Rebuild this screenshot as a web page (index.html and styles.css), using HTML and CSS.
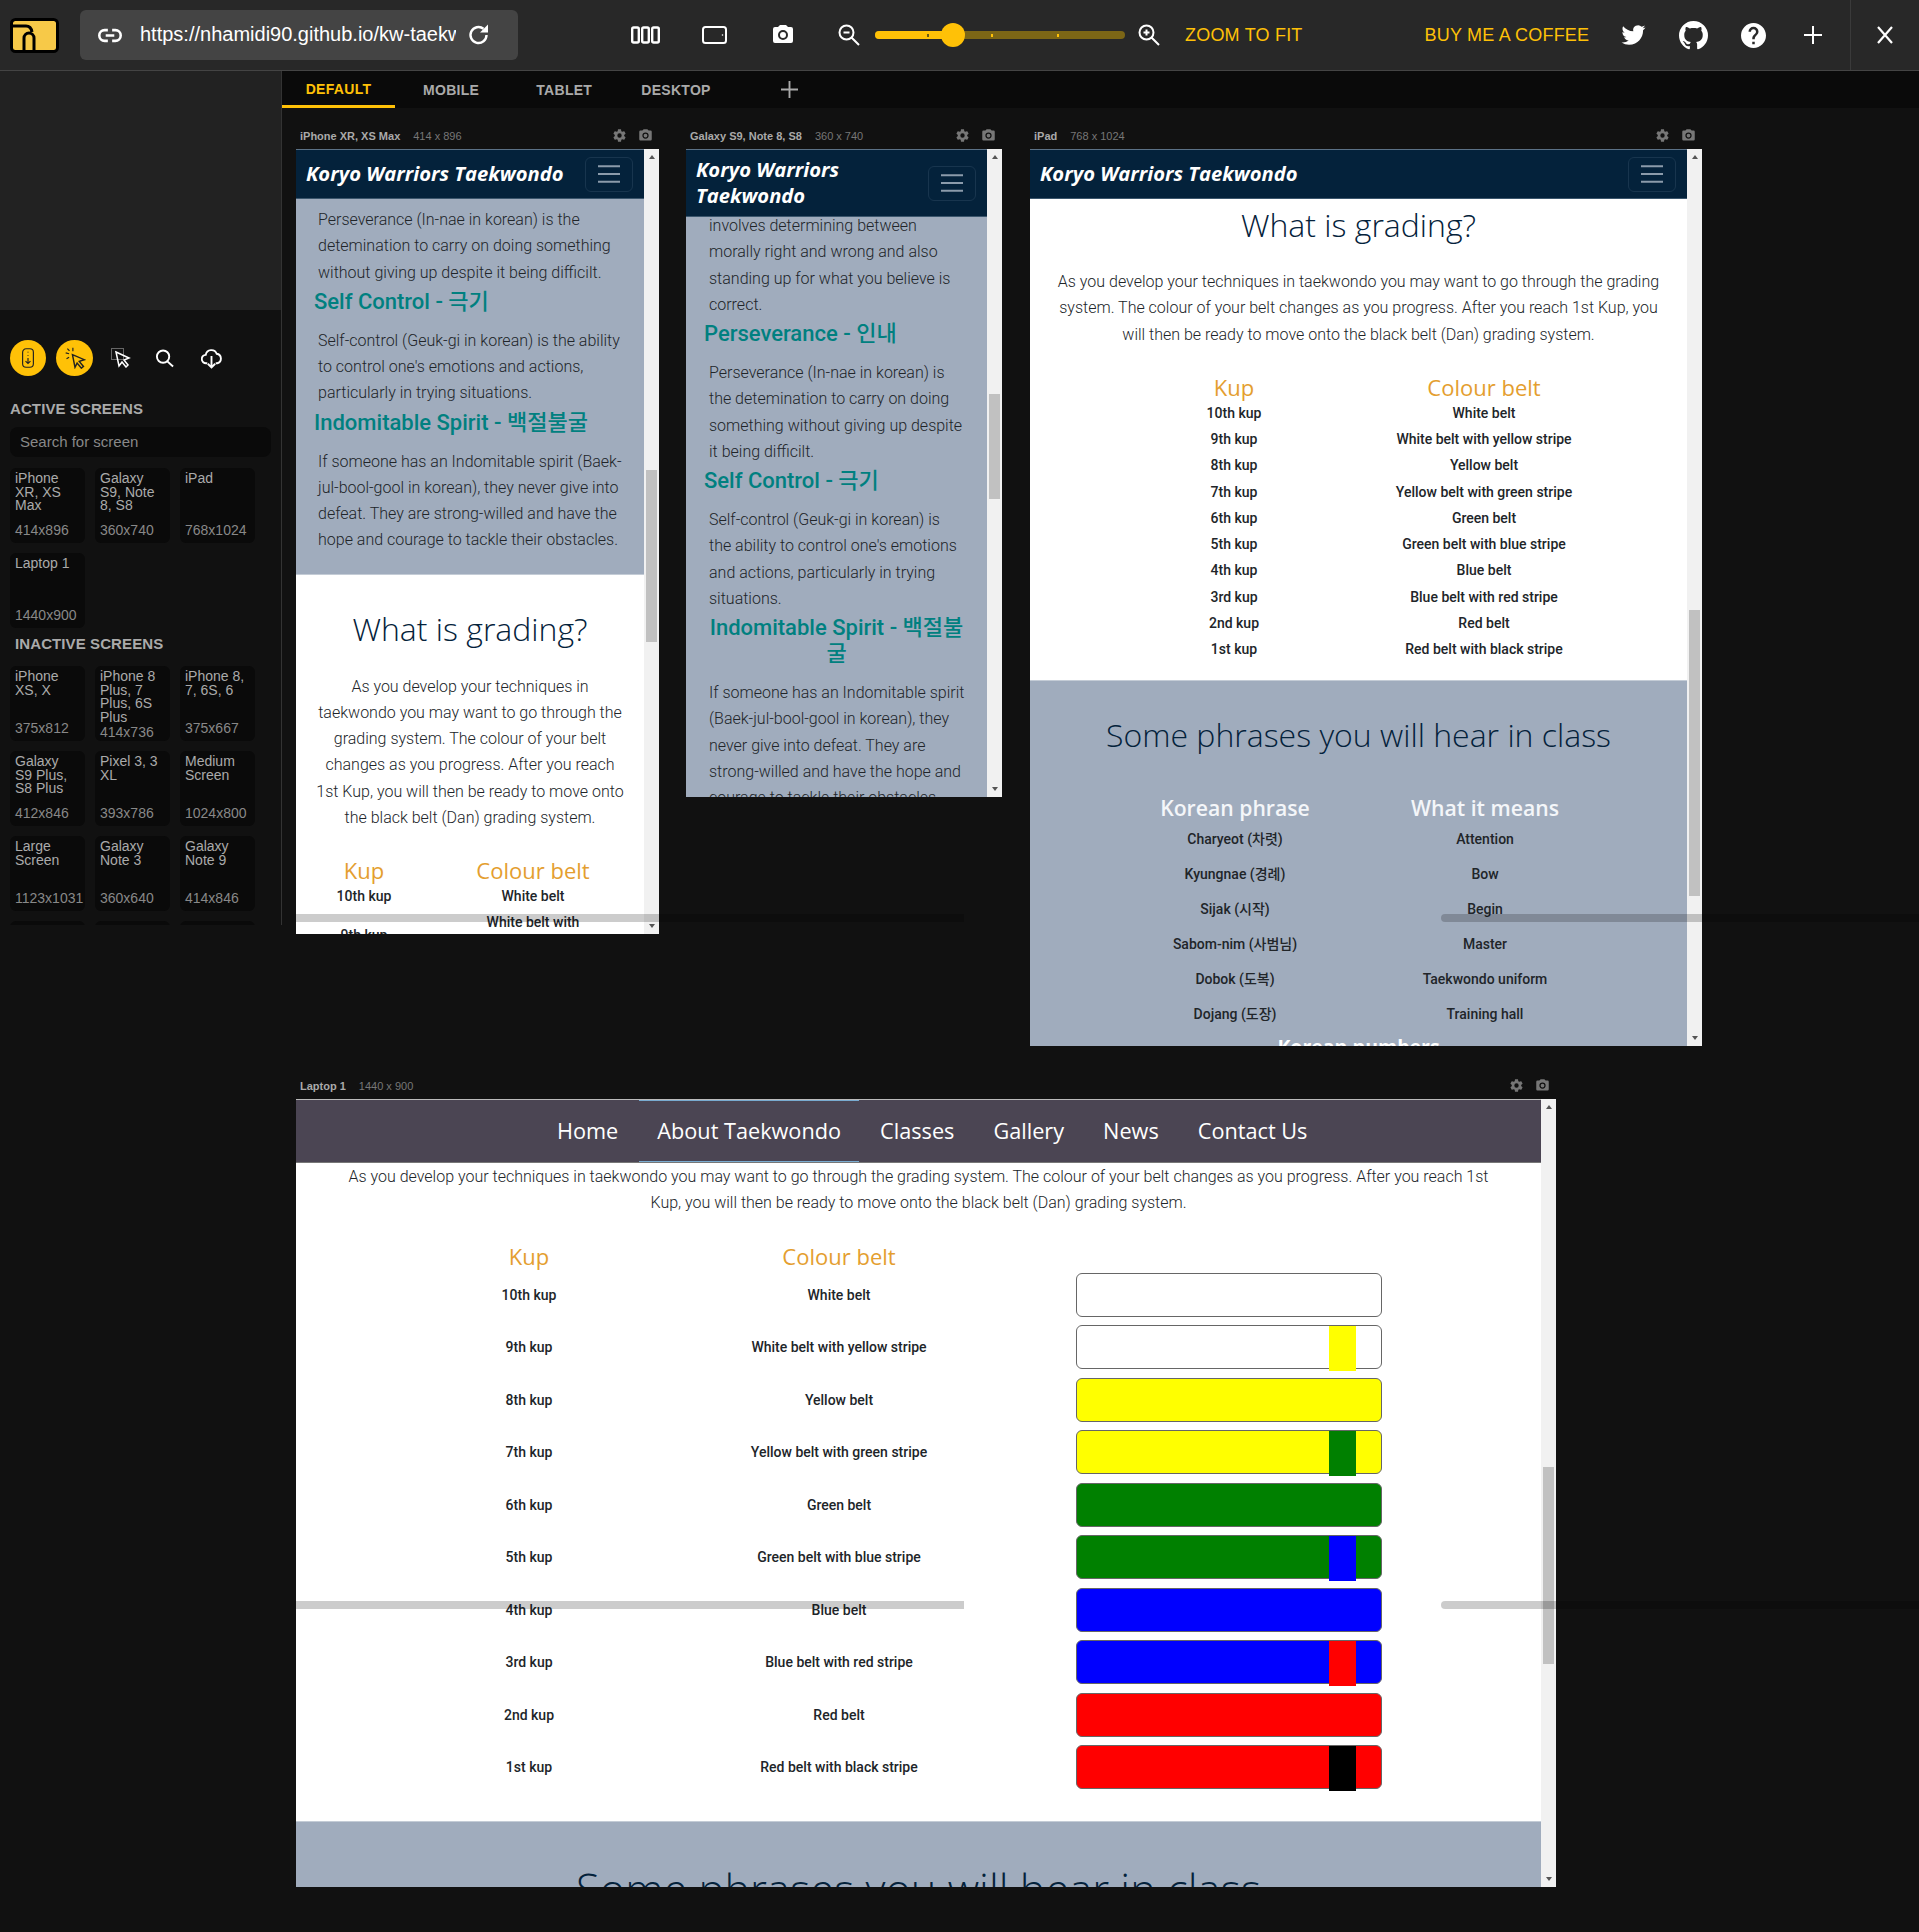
FILE: index.html
```html
<!DOCTYPE html>
<html lang="en">
<head>
    <meta charset="UTF-8">
    <meta name="viewport" content="width=device-width, initial-scale=1.0">
    <title>Responsively</title>
    <link rel="stylesheet" href="styles.css">
</head>
<body>
    <svg class="sprite">
        <symbol id="gear" viewBox="0 0 24 24"><path d="M12,15.5A3.5,3.5 0 0,1 8.5,12A3.5,3.5 0 0,1 12,8.5A3.5,3.5 0 0,1 15.5,12A3.5,3.5 0 0,1 12,15.5M19.43,12.97C19.47,12.65 19.5,12.33 19.5,12C19.5,11.67 19.47,11.34 19.43,11L21.54,9.37C21.73,9.22 21.78,8.95 21.66,8.73L19.66,5.27C19.54,5.05 19.27,4.96 19.05,5.05L16.56,6.05C16.04,5.66 15.5,5.32 14.87,5.07L14.5,2.42C14.46,2.18 14.25,2 14,2H10C9.75,2 9.54,2.18 9.5,2.42L9.13,5.07C8.5,5.32 7.96,5.66 7.44,6.05L4.95,5.05C4.73,4.96 4.46,5.05 4.34,5.27L2.34,8.73C2.21,8.95 2.27,9.22 2.46,9.37L4.57,11C4.53,11.34 4.5,11.67 4.5,12C4.5,12.33 4.53,12.65 4.57,12.97L2.46,14.63C2.27,14.78 2.21,15.05 2.34,15.27L4.34,18.73C4.46,18.95 4.73,19.03 4.95,18.95L7.44,17.94C7.96,18.34 8.5,18.68 9.13,18.93L9.5,21.58C9.54,21.82 9.75,22 10,22H14C14.25,22 14.46,21.82 14.5,21.58L14.87,18.93C15.5,18.67 16.04,18.34 16.56,17.94L19.05,18.95C19.27,19.03 19.54,18.95 19.66,18.73L21.66,15.27C21.78,15.05 21.73,14.78 21.54,14.63L19.43,12.97Z"/></symbol>
        <symbol id="camera" viewBox="0 0 24 24"><path d="M4,4H7L9,2H15L17,4H20A2,2 0 0,1 22,6V18A2,2 0 0,1 20,20H4A2,2 0 0,1 2,18V6A2,2 0 0,1 4,4M12,7A5,5 0 0,0 7,12A5,5 0 0,0 12,17A5,5 0 0,0 17,12A5,5 0 0,0 12,7M12,9A3,3 0 0,1 15,12A3,3 0 0,1 12,15A3,3 0 0,1 9,12A3,3 0 0,1 12,9Z"/></symbol>
        <symbol id="burger" viewBox="0 0 22 18"><path d="M0 1.2h22M0 9h22M0 16.8h22" stroke="#8b9bab" stroke-width="2"/></symbol>
    </svg>

    <header class="topbar">
        <svg class="logo" viewBox="0 0 49 35"><rect x="1.500" y="1.500" width="46" height="32" rx="4" fill="#f7c948" stroke="#000" stroke-width="3"/><path d="M1.500 8H16q5 0 6 6M14 33V20a5 5 0 0 1 10 0v13" fill="none" stroke="#000" stroke-width="3"/></svg>
        <div class="urlbar">
            <svg class="url-link" viewBox="0 0 24 14" fill="none" stroke="#fff" stroke-width="2.4"><path d="M10 2H7a5 5 0 0 0 0 10h3M14 2h3a5 5 0 0 1 0 10h-3M8 7h8"/></svg>
            <span class="url-text">https://nhamidi90.github.io/kw-taekwondo/grading.html</span>
            <svg class="url-reload" viewBox="0 0 24 24" fill="none" stroke="#fff" stroke-width="2.4"><path d="M19.5 12a8 8 0 1 1-3-6.2"/><path d="M21 1.500v8h-8z" fill="#fff" stroke="none"/></svg>
        </div>
        <svg class="tool tool-phones" viewBox="0 0 29 18" fill="none" stroke="#fff" stroke-width="2.4"><rect x="1.200" y="1.500" width="6.600" height="15" rx="1.500"/><rect x="11.200" y="1.500" width="6.600" height="15" rx="1.500"/><rect x="21.200" y="1.500" width="6.600" height="15" rx="1.500"/></svg>
        <svg class="tool tool-tablet" viewBox="0 0 25 18" fill="none" stroke="#fff" stroke-width="2"><rect x="1" y="1" width="23" height="16" rx="2.500"/><circle cx="20.500" cy="9" r=".8" fill="#fff" stroke="none"/></svg>
        <svg class="tool tool-camera" fill="#fff"><use href="#camera"/></svg>
        <svg class="tool tool-zoomout" viewBox="0 0 22 22" fill="none" stroke="#fff" stroke-width="2"><circle cx="8.500" cy="8.500" r="7"/><path d="M13.500 13.500l7.500 7.500M5.500 8.500h6"/></svg>
        <div class="slider"><div class="slider-fill"></div><i class="tick tick-a"></i><i class="tick tick-b"></i><i class="tick tick-c"></i><div class="slider-thumb"></div></div>
        <svg class="tool tool-zoomin" viewBox="0 0 22 22" fill="none" stroke="#fff" stroke-width="2"><circle cx="8.500" cy="8.500" r="7"/><path d="M13.500 13.500l7.500 7.500M5.500 8.500h6M8.500 5.500v6"/></svg>
        <span class="topbar-link zoom-fit">ZOOM TO FIT</span>
        <span class="topbar-link coffee">BUY ME A COFFEE</span>
        <svg class="tool tool-twitter" viewBox="0 0 24 24" fill="#fff"><path d="M23.953 4.57a10 10 0 01-2.825.775 4.958 4.958 0 002.163-2.723c-.951.555-2.005.959-3.127 1.184a4.92 4.92 0 00-8.384 4.482C7.69 8.095 4.067 6.13 1.64 3.162a4.822 4.822 0 00-.666 2.475c0 1.71.87 3.213 2.188 4.096a4.904 4.904 0 01-2.228-.616v.06a4.923 4.923 0 003.946 4.827 4.996 4.996 0 01-2.212.085 4.936 4.936 0 004.604 3.417 9.867 9.867 0 01-6.102 2.105c-.39 0-.779-.023-1.17-.067a13.995 13.995 0 007.557 2.209c9.053 0 13.998-7.496 13.998-13.985 0-.21 0-.42-.015-.63A9.935 9.935 0 0024 4.59z"/></svg>
        <svg class="tool tool-github" viewBox="2 2 20 20" fill="#fff"><path d="M12,2A10,10 0 0,0 2,12C2,16.42 4.87,20.17 8.84,21.5C9.34,21.58 9.5,21.27 9.5,21C9.5,20.77 9.5,20.14 9.5,19.31C6.73,19.91 6.14,17.97 6.14,17.97C5.68,16.81 5.03,16.5 5.03,16.5C4.12,15.88 5.1,15.9 5.1,15.9C6.1,15.97 6.63,16.93 6.63,16.93C7.5,18.45 8.97,18 9.54,17.76C9.63,17.11 9.89,16.67 10.17,16.42C7.95,16.17 5.62,15.31 5.62,11.5C5.62,10.39 6,9.5 6.65,8.79C6.55,8.54 6.2,7.5 6.75,6.15C6.75,6.15 7.59,5.88 9.5,7.17C10.29,6.95 11.15,6.84 12,6.84C12.85,6.84 13.71,6.95 14.5,7.17C16.41,5.88 17.25,6.15 17.25,6.15C17.8,7.5 17.45,8.54 17.35,8.79C18,9.5 18.38,10.39 18.38,11.5C18.38,15.32 16.04,16.16 13.81,16.41C14.17,16.72 14.5,17.33 14.5,18.26C14.5,19.6 14.5,20.68 14.5,21C14.5,21.27 14.66,21.59 15.17,21.5C19.14,20.16 22,16.42 22,12A10,10 0 0,0 12,2Z"/></svg>
        <svg class="tool tool-help" viewBox="2 2 20 20" fill="#fff"><path d="M15.07,11.25L14.17,12.17C13.45,12.89 13,13.5 13,15H11V14.5C11,13.39 11.45,12.39 12.17,11.67L13.41,10.41C13.78,10.05 14,9.55 14,9C14,7.89 13.1,7 12,7A2,2 0 0,0 10,9H8A4,4 0 0,1 12,5A4,4 0 0,1 16,9C16,9.88 15.64,10.67 15.07,11.25M13,19H11V17H13M12,2A10,10 0 0,0 2,12A10,10 0 0,0 12,22A10,10 0 0,0 22,12C22,6.47 17.5,2 12,2Z"/></svg>
        <svg class="tool tool-plus" viewBox="0 0 18 18" stroke="#fff" stroke-width="2"><path d="M9 0v18M0 9h18"/></svg>
        <div class="topbar-close"><svg viewBox="0 0 18 18" stroke="#fff" stroke-width="2.200"><path d="M2 1l14 16M16 1L2 17"/></svg></div>
    </header>

    <div class="workspace">
        <aside class="sidebar">
            <div class="sidebar-top"></div>
            <div class="sidebar-tools">
                <span class="round-btn">
                    <svg viewBox="0 0 18 26" fill="none" stroke="#222" stroke-width="1.500"><rect x="2" y="1" width="14" height="24" rx="4.500"/><path d="M9 5v1M9 9v1M9 13v7M5.800 17L9 20.200 12.200 17"/></svg>
                </span>
                <span class="round-btn round-btn-wide">
                    <svg viewBox="0 0 26 26" fill="none" stroke="#222" stroke-width="1.700"><path d="M10 9l14 6-6 2 5 6-2.500 2-5-6-2.500 5z"/><path d="M6 8L2 7M6.500 4.500L4 2M10.500 5V1M6 12l-3 2" stroke-width="1.400"/></svg>
                </span>
                <svg class="side-icon side-cursor" viewBox="0 0 20 20" fill="none" stroke="#fff" stroke-width="1.500"><rect x=".5" y=".5" width="12" height="11" stroke="#666" stroke-width="1"/><path d="M5 4l13 6-5 2 4 5-2 2-4-5-3 4z"/></svg>
                <svg class="side-icon side-search" viewBox="0 0 20 20" fill="none" stroke="#fff" stroke-width="2"><circle cx="8.500" cy="8" r="6.500"/><path d="M13 13l6 5.500"/></svg>
                <svg class="side-icon side-cloud" viewBox="0 0 20 20" fill="none" stroke="#fff" stroke-width="1.800"><path d="M6 14.500H5a4 4 0 0 1-.5-8 5.500 5.500 0 0 1 10.500-1 4.600 4.600 0 0 1 .5 9H14"/><path d="M10 7.500v11M6.500 15l3.500 3.500 3.500-3.500"/></svg>
            </div>
            <h4 class="side-title">ACTIVE SCREENS</h4>
            <div class="side-search-box">Search for screen</div>
            <div class="screen-grid">
                <div class="screen-card"><span>iPhone XR, XS Max</span><small>414x896</small></div>
                <div class="screen-card"><span>Galaxy S9, Note 8, S8</span><small>360x740</small></div>
                <div class="screen-card"><span>iPad</span><small>768x1024</small></div>
                <div class="screen-card"><span>Laptop 1</span><small>1440x900</small></div>
            </div>
            <h4 class="side-title side-title-inactive">INACTIVE SCREENS</h4>
            <div class="screen-grid">
                <div class="screen-card"><span>iPhone XS, X</span><small>375x812</small></div>
                <div class="screen-card"><span>iPhone 8 Plus, 7 Plus, 6S Plus</span><small>414x736</small></div>
                <div class="screen-card"><span>iPhone 8, 7, 6S, 6</span><small>375x667</small></div>
                <div class="screen-card"><span>Galaxy S9 Plus, S8 Plus</span><small>412x846</small></div>
                <div class="screen-card"><span>Pixel 3, 3 XL</span><small>393x786</small></div>
                <div class="screen-card"><span>Medium Screen</span><small>1024x800</small></div>
                <div class="screen-card"><span>Large Screen</span><small>1123x1031</small></div>
                <div class="screen-card"><span>Galaxy Note 3</span><small>360x640</small></div>
                <div class="screen-card"><span>Galaxy Note 9</span><small>414x846</small></div>
                <div class="screen-card"></div>
                <div class="screen-card"></div>
                <div class="screen-card"></div>
            </div>
        </aside>

        <main class="main">
            <nav class="tabs">
                <span class="tab tab-active">DEFAULT</span>
                <span class="tab tab-mobile">MOBILE</span>
                <span class="tab tab-tablet">TABLET</span>
                <span class="tab tab-desktop">DESKTOP</span>
                <svg class="tab-add" viewBox="0 0 18 18" stroke="#aaa" stroke-width="2"><path d="M9 0v18M0 9h18"/></svg>
            </nav>

            <div class="canvas">
                <!-- iPhone -->
                <section class="device device-iphone">
                    <div class="device-bar"><b>iPhone XR, XS Max</b><span>414 x 896</span><svg class="bar-gear"><use href="#gear"/></svg><svg class="bar-camera"><use href="#camera"/></svg></div>
                    <div class="frame">
                        <div class="page">
                            <div class="app-header"><span class="brand">Koryo Warriors Taekwondo</span><span class="burger"><svg><use href="#burger"/></svg></span></div>
                            <div class="grey grey-iphone">
                                <p class="copy copy-first">Perseverance (In-nae in korean) is the detemination to carry on doing something without giving up despite it being difficilt.</p>
                                <h3 class="kw-head">Self Control - 극기</h3>
                                <p class="copy">Self-control (Geuk-gi in korean) is the ability to control one's emotions and actions, particularly in trying situations.</p>
                                <h3 class="kw-head">Indomitable Spirit - 백절불굴</h3>
                                <p class="copy">If someone has an Indomitable spirit (Baek-jul-bool-gool in korean), they never give into defeat. They are strong-willed and have the hope and courage to tackle their obstacles.</p>
                            </div>
                            <h2 class="page-title title-iphone">What is grading?</h2>
                            <p class="copy copy-center copy-narrow">As you develop your techniques in taekwondo you may want to go through the grading system. The colour of your belt changes as you progress. After you reach 1st Kup, you will then be ready to move onto the black belt (Dan) grading system.</p>
                            <div class="kup-table kup-iphone">
                                <h4>Kup</h4><h4>Colour belt</h4>
                                <span>10th kup</span><span>White belt</span>
                                <span>9th kup</span><span>White belt with yellow stripe</span>
                            </div>
                        </div>
                        <div class="scrollbar"><i class="arrow-up"></i><div class="thumb thumb-iphone"></div><i class="arrow-down"></i></div>
                    </div>
                </section>

                <!-- Galaxy -->
                <section class="device device-galaxy">
                    <div class="device-bar"><b>Galaxy S9, Note 8, S8</b><span>360 x 740</span><svg class="bar-gear"><use href="#gear"/></svg><svg class="bar-camera"><use href="#camera"/></svg></div>
                    <div class="frame">
                        <div class="page">
                            <div class="app-header app-header-tall"><span class="brand">Koryo Warriors Taekwondo</span><span class="burger"><svg><use href="#burger"/></svg></span></div>
                            <div class="grey grey-galaxy">
                                <p class="copy">involves determining between morally right and wrong and also standing up for what you believe is correct.</p>
                                <h3 class="kw-head">Perseverance - 인내</h3>
                                <p class="copy">Perseverance (In-nae in korean) is the detemination to carry on doing something without giving up despite it being difficilt.</p>
                                <h3 class="kw-head">Self Control - 극기</h3>
                                <p class="copy">Self-control (Geuk-gi in korean) is the ability to control one's emotions and actions, particularly in trying situations.</p>
                                <h3 class="kw-head">Indomitable Spirit - 백절불굴</h3>
                                <p class="copy">If someone has an Indomitable spirit (Baek-jul-bool-gool in korean), they never give into defeat. They are strong-willed and have the hope and courage to tackle their obstacles.</p>
                            </div>
                        </div>
                        <div class="scrollbar"><i class="arrow-up"></i><div class="thumb thumb-galaxy"></div><i class="arrow-down"></i></div>
                    </div>
                </section>

                <!-- iPad -->
                <section class="device device-ipad">
                    <div class="device-bar"><b>iPad</b><span>768 x 1024</span><svg class="bar-gear"><use href="#gear"/></svg><svg class="bar-camera"><use href="#camera"/></svg></div>
                    <div class="frame">
                        <div class="page">
                            <div class="app-header"><span class="brand">Koryo Warriors Taekwondo</span><span class="burger"><svg><use href="#burger"/></svg></span></div>
                            <h2 class="page-title title-ipad">What is grading?</h2>
                            <p class="copy copy-center">As you develop your techniques in taekwondo you may want to go through the grading system. The colour of your belt changes as you progress. After you reach 1st Kup, you will then be ready to move onto the black belt (Dan) grading system.</p>
                            <div class="kup-table kup-ipad">
                                <h4>Kup</h4><h4>Colour belt</h4>
                                <span>10th kup</span><span>White belt</span>
                                <span>9th kup</span><span>White belt with yellow stripe</span>
                                <span>8th kup</span><span>Yellow belt</span>
                                <span>7th kup</span><span>Yellow belt with green stripe</span>
                                <span>6th kup</span><span>Green belt</span>
                                <span>5th kup</span><span>Green belt with blue stripe</span>
                                <span>4th kup</span><span>Blue belt</span>
                                <span>3rd kup</span><span>Blue belt with red stripe</span>
                                <span>2nd kup</span><span>Red belt</span>
                                <span>1st kup</span><span>Red belt with black stripe</span>
                            </div>
                            <div class="grey grey-phrases">
                                <h2 class="page-title title-phrases">Some phrases you will hear in class</h2>
                                <div class="phrase-table">
                                    <h4>Korean phrase</h4><h4>What it means</h4>
                                    <span>Charyeot (차렷)</span><span>Attention</span>
                                    <span>Kyungnae (경례)</span><span>Bow</span>
                                    <span>Sijak (시작)</span><span>Begin</span>
                                    <span>Sabom-nim (사범님)</span><span>Master</span>
                                    <span>Dobok (도복)</span><span>Taekwondo uniform</span>
                                    <span>Dojang (도장)</span><span>Training hall</span>
                                </div>
                                <h4 class="numbers-title">Korean numbers</h4>
                            </div>
                        </div>
                        <div class="scrollbar"><i class="arrow-up"></i><div class="thumb thumb-ipad"></div><i class="arrow-down"></i></div>
                    </div>
                </section>

                <!-- Laptop -->
                <section class="device device-laptop">
                    <div class="device-bar"><b>Laptop 1</b><span>1440 x 900</span><svg class="bar-gear"><use href="#gear"/></svg><svg class="bar-camera"><use href="#camera"/></svg></div>
                    <div class="frame">
                        <div class="page">
                            <ul class="site-nav">
                                <li>Home</li>
                                <li class="site-nav-hover">About Taekwondo</li>
                                <li>Classes</li>
                                <li>Gallery</li>
                                <li>News</li>
                                <li>Contact Us</li>
                            </ul>
                            <p class="copy copy-center copy-laptop">As you develop your techniques in taekwondo you may want to go through the grading system. The colour of your belt changes as you progress. After you reach 1st Kup, you will then be ready to move onto the black belt (Dan) grading system.</p>
                            <div class="belt-table">
                                <h4>Kup</h4><h4>Colour belt</h4><i></i>
                                <span>10th kup</span><span>White belt</span><div class="belt belt-white"></div>
                                <span>9th kup</span><span>White belt with yellow stripe</span><div class="belt belt-white"><i class="stripe belt-yellow"></i></div>
                                <span>8th kup</span><span>Yellow belt</span><div class="belt belt-yellow"></div>
                                <span>7th kup</span><span>Yellow belt with green stripe</span><div class="belt belt-yellow"><i class="stripe belt-green"></i></div>
                                <span>6th kup</span><span>Green belt</span><div class="belt belt-green"></div>
                                <span>5th kup</span><span>Green belt with blue stripe</span><div class="belt belt-green"><i class="stripe belt-blue"></i></div>
                                <span>4th kup</span><span>Blue belt</span><div class="belt belt-blue"></div>
                                <span>3rd kup</span><span>Blue belt with red stripe</span><div class="belt belt-blue"><i class="stripe belt-red"></i></div>
                                <span>2nd kup</span><span>Red belt</span><div class="belt belt-red"></div>
                                <span>1st kup</span><span>Red belt with black stripe</span><div class="belt belt-red"><i class="stripe belt-black"></i></div>
                            </div>
                            <div class="grey grey-laptop">
                                <h2 class="page-title title-laptop">Some phrases you will hear in class</h2>
                            </div>
                        </div>
                        <div class="scrollbar"><i class="arrow-up"></i><div class="thumb thumb-laptop"></div><i class="arrow-down"></i></div>
                    </div>
                </section>

                <!-- ghost scrollbars of the preview windows, they lie over everything -->
                <div class="ghost ghost-a1"></div>
                <div class="ghost ghost-a2"></div>
                <div class="ghost ghost-b1"></div>
                <div class="ghost ghost-b2"></div>
            </div>
        </main>
    </div>
</body>
</html>
```
FILE: styles.css
```css
*{
    box-sizing: border-box;
}
html,body{
    margin: 0;
    height: 1932px;
    overflow: hidden;
}
body{
    background: #111;
    font-family: "Liberation Sans", Arial, sans-serif;
    color: #fff;
}
.sprite{
    display: none;
}

/* top bar */
.topbar{
    height: 71px;
    background: #282828;
    border-bottom: 1px solid #444;
    display: flex;
    align-items: center;
    padding-left: 10px;
}
.logo{
    width: 49px;
    height: 35px;
}
.urlbar{
    width: 438px;
    height: 50px;
    margin-left: 21px;
    background: #444;
    border-radius: 6px;
    display: flex;
    align-items: center;
    padding-left: 17px;
}
.url-link{
    width: 26px;
    height: 15px;
    flex: none;
}
.url-text{
    width: 316px;
    margin: -2px 2px 0 17px;
    font-size: 20px;
    white-space: nowrap;
    overflow: hidden;
    flex: none;
}
.url-reload{
    width: 24px;
    height: 24px;
    margin-left: 9px;
    flex: none;
}
.tool{
    flex: none;
}
.tool-phones{
    width: 29px;
    height: 18px;
    margin-left: 113px;
}
.tool-tablet{
    width: 25px;
    height: 18px;
    margin-left: 42px;
}
.tool-camera{
    width: 24px;
    height: 24px;
    margin-left: 44px;
}
.tool-zoomout{
    width: 22px;
    height: 22px;
    margin-left: 43px;
}
.slider{
    position: relative;
    width: 250px;
    height: 8px;
    margin-left: 15px;
    background: #7c6616;
    border-radius: 4px;
}
.slider-fill{
    width: 78px;
    height: 8px;
    background: #ffc107;
    border-radius: 4px;
}
.tick{
    position: absolute;
    top: 3px;
    width: 2px;
    height: 3px;
    background: #ffc107;
}
.tick-a{
    left: 52px;
    background: #6b5a10;
}
.tick-b{
    left: 116px;
}
.tick-c{
    left: 182px;
}
.slider-thumb{
    position: absolute;
    left: 66px;
    top: -8px;
    width: 24px;
    height: 24px;
    border-radius: 50%;
    background: #ffc107;
}
.tool-zoomin{
    width: 22px;
    height: 22px;
    margin-left: 13px;
}
.topbar-link{
    font-size: 18px;
    letter-spacing: .2px;
    color: #ffc107;
    white-space: nowrap;
}
.zoom-fit{
    margin-left: 25px;
}
.coffee{
    margin-left: 122px;
}
.tool-twitter{
    width: 27px;
    height: 24px;
    margin-left: 31px;
}
.tool-github{
    width: 29px;
    height: 29px;
    margin-left: 32px;
}
.tool-help{
    width: 25px;
    height: 25px;
    margin-left: 33px;
}
.tool-plus{
    width: 18px;
    height: 18px;
    margin-left: 38px;
}
.topbar-close{
    margin-left: auto;
    width: 69px;
    height: 70px;
    border-left: 1px solid #3a3a3a;
    display: flex;
    align-items: center;
    justify-content: center;
}
.topbar-close svg{
    width: 18px;
    height: 18px;
}

/* layout below the bar */
.workspace{
    display: flex;
}

/* sidebar */
.sidebar{
    width: 282px;
    height: 854px;
    flex: none;
    overflow: hidden;
    border-right: 1px solid #333;
    padding-bottom: 0;
}
.sidebar-top{
    height: 239px;
    background: #222;
    margin-right: -1px;
}
.sidebar-tools{
    display: flex;
    align-items: center;
    margin-top: 30px;
    padding-left: 10px;
}
.round-btn{
    width: 36px;
    height: 36px;
    border-radius: 50%;
    background: #ffc107;
    display: flex;
    align-items: center;
    justify-content: center;
    flex: none;
}
.round-btn svg{
    width: 14px;
    height: 20px;
}
.round-btn-wide{
    width: 37px;
    margin-left: 10px;
}
.round-btn-wide svg{
    width: 22px;
    height: 22px;
}
.side-icon{
    flex: none;
}
.side-cursor{
    width: 20px;
    height: 20px;
    margin-left: 18px;
}
.side-search{
    width: 19px;
    height: 19px;
    margin-left: 24px;
}
.side-cloud{
    width: 21px;
    height: 21px;
    margin-left: 27px;
}
.side-title{
    margin: 24px 0 0 10px;
    font-size: 15px;
    line-height: 18px;
    font-weight: 700;
    letter-spacing: .1px;
    color: #aaa;
}
.side-title-inactive{
    margin: 7px 0 13px 15px;
}
.side-search-box{
    width: 261px;
    height: 30px;
    margin: 9px 0 11px 10px;
    padding: 0 10px;
    border-radius: 8px;
    background: #0a0a0a;
    color: #888;
    font-size: 15px;
    line-height: 29px;
}
.screen-grid{
    display: grid;
    grid-template-columns: repeat(3,75px);
    grid-auto-rows: 75px;
    gap: 10px;
    padding-left: 10px;
}
.screen-card{
    background: #0a0a0a;
    border-radius: 6px;
    padding: 4px 10px 5px 5px;
    display: flex;
    flex-direction: column;
    justify-content: space-between;
    font-size: 14px;
    line-height: 13.5px;
    color: #aaa;
    overflow: hidden;
}
.screen-card small{
    font-size: 14px;
    line-height: 16px;
    color: #888;
    white-space: nowrap;
}

/* tabs */
.main{
    flex: 1;
    min-width: 0;
}
.tabs{
    height: 37px;
    background: #0a0a0a;
    display: flex;
    align-items: center;
}
.tab{
    font-size: 14px;
    font-weight: 700;
    letter-spacing: .3px;
    color: #aaa;
}
.tab-active{
    width: 113px;
    height: 37px;
    line-height: 36px;
    text-align: center;
    color: #ffc107;
    border-bottom: 3px solid #ffc107;
}
.tab-mobile{
    margin-left: 28px;
}
.tab-tablet{
    margin-left: 57px;
}
.tab-desktop{
    margin-left: 49px;
}
.tab-add{
    width: 17px;
    height: 17px;
    margin-left: 70px;
}

/* canvas with the preview windows */
.canvas{
    position: relative;
}
.device{
    position: absolute;
    top: 16px;
    display: flex;
    flex-direction: column;
}
.device-iphone{
    left: 14px;
    width: 363px;
}
.device-galaxy{
    left: 404px;
    width: 316px;
}
.device-ipad{
    left: 748px;
    width: 672px;
}
.device-laptop{
    left: 14px;
    top: 966px;
    width: 1260px;
}
.device-bar{
    height: 25px;
    display: flex;
    align-items: center;
    padding: 0 6px 2px 4px;
    font-size: 11px;
    color: #777;
}
.device-bar b{
    color: #aaa;
    margin-right: 13px;
}
.device-bar svg{
    width: 15px;
    height: 15px;
    fill: #777;
}
.bar-gear{
    margin-left: auto;
    margin-right: 11px;
}
.frame{
    display: flex;
    overflow: hidden;
}
.device-iphone .frame{
    height: 785px;
}
.device-galaxy .frame{
    height: 648px;
}
.device-ipad .frame{
    height: 897px;
}
.device-laptop .frame{
    height: 788px;
}
.page{
    flex: 1;
    min-width: 0;
    background: #fff;
    overflow: hidden;
    color: #212529;
}
.scrollbar{
    width: 15px;
    flex: none;
    background: #f1f1f1;
    display: flex;
    flex-direction: column;
    align-items: center;
    padding: 6px 0;
}
.arrow-up{
    border: 3.5px solid transparent;
    border-top: 0;
    border-bottom: 4px solid #555;
}
.arrow-down{
    margin-top: auto;
    border: 3.5px solid transparent;
    border-bottom: 0;
    border-top: 4px solid #555;
}
.thumb{
    width: 11px;
    background: #c1c1c1;
}
.thumb-iphone{
    margin-top: 311px;
    height: 172px;
}
.thumb-galaxy{
    margin-top: 235px;
    height: 105px;
}
.thumb-ipad{
    margin-top: 451px;
    height: 286px;
}
.thumb-laptop{
    margin-top: 358px;
    height: 197px;
}

/* the site inside the windows */
.app-header{
    position: relative;
    z-index: 1;
    height: 50px;
    display: flex;
    align-items: center;
    justify-content: space-between;
    background: #04223b;
    border-top: 1px solid #5b7186;
    border-bottom: 1px solid #3b566d;
    padding: 0 11px 0 10px;
}
.app-header-tall{
    height: 68px;
}
.app-header-tall .brand{
    width: 190px;
    margin-top: -3px;
}
.brand{
    margin-top: -2px;
    font-family: "Open Sans", sans-serif;
    font-style: italic;
    font-weight: 700;
    font-size: 20.2px;
    line-height: 26px;
    color: #fff;
}
.burger{
    width: 48px;
    height: 35px;
    display: flex;
    align-items: center;
    justify-content: center;
    border: 1px solid #18354e;
    border-radius: 6px;
    flex: none;
}
.burger svg{
    width: 22px;
    height: 18px;
}
.grey{
    background: #a0acbd;
    padding-bottom: 20px;
    border-bottom: 1px solid #c4ccd6;
}
.grey-galaxy{
    margin-top: -4px;
}
.grey-galaxy .copy{
    padding: 0 22px 0 23px;
}
.copy{
    margin: 0;
    padding: 0 22px;
    font-family: Roboto, sans-serif;
    font-weight: 300;
    font-size: 16px;
    line-height: 26.25px;
}
.copy-first{
    padding-top: 8px;
}
.copy-center{
    text-align: center;
}
.copy-narrow{
    padding: 0 18px;
}
.copy-laptop{
    padding: 0 44px;
    margin-top: 1px;
}
.kw-head{
    width: fit-content;
    margin: 3px 18px 13px;
    font-family: Roboto, "Noto Sans CJK KR", sans-serif;
    font-weight: 500;
    font-size: 22px;
    line-height: 26px;
    text-align: center;
    color: #008080;
}
.page-title{
    margin: 0;
    font-family: "Open Sans", sans-serif;
    font-weight: 300;
    font-size: 32px;
    line-height: 44px;
    text-align: center;
    color: #04223b;
}
.title-iphone{
    padding: 32px 0 23px;
}
.title-ipad{
    padding: 4px 0 22px;
}
.title-phrases{
    padding-top: 32px;
}
.title-laptop{
    font-size: 43.4px;
    line-height: 60px;
    padding-top: 38px;
}
.kup-table,.phrase-table{
    display: grid;
    text-align: center;
    align-items: center;
    font-family: Roboto, "Noto Sans CJK KR", sans-serif;
    font-weight: 500;
    font-size: 14px;
    line-height: 26.25px;
}
.kup-table h4,.phrase-table h4,.belt-table h4{
    margin: 0;
    font-family: "Open Sans", sans-serif;
    font-weight: 400;
    font-size: 22px;
    line-height: 26px;
    color: #e49e2f;
}
.kup-iphone{
    grid-template-columns: 100px 130px;
    column-gap: 54px;
    margin: 26px 0 0 18px;
}
.kup-ipad{
    grid-template-columns: 200px 300px;
    margin: 26px 0 18px 104px;
}
.grey-phrases{
    padding-bottom: 0;
    border-top: 1px solid #c4ccd6;
    border-bottom: 0;
}
.phrase-table{
    grid-template-columns: 200px 300px;
    grid-template-rows: 27px;
    grid-auto-rows: 35px;
    margin: 37px 0 0 105px;
}
.phrase-table h4{
    color: #f4f6f9;
    font-weight: 600;
    font-size: 21.2px;
}
.numbers-title{
    margin: 3px 0 0;
    text-align: center;
    color: #fff;
    font-family: "Open Sans", sans-serif;
    font-size: 19.5px;
    line-height: 26px;
}

/* laptop size page */
.site-nav{
    margin: 0;
    height: 64px;
    list-style: none;
    display: flex;
    align-items: stretch;
    gap: 3px;
    padding: 0 0 0 243px;
    background: #4b4553;
    border-top: 1px solid #bbb;
    border-bottom: 1px solid #777;
    font-family: "Open Sans", sans-serif;
    font-size: 21.7px;
    color: #fff;
}
.site-nav li{
    padding: 0 18px;
    line-height: 62px;
}
.site-nav-hover{
    box-shadow: inset 0 1px 0 #79abd0, inset 0 -1px 0 #79abd0;
}
.belt-table{
    display: grid;
    grid-template-columns: 242px 378px 354px;
    grid-template-rows: 26px;
    grid-auto-rows: 52.5px;
    align-items: center;
    text-align: center;
    justify-items: center;
    margin: 26px 0 0 112px;
    font-family: Roboto, sans-serif;
    font-weight: 500;
    font-size: 14px;
    color: #212529;
}
.belt-table .belt{
    justify-self: start;
    margin-left: 48px;
}
.belt{
    width: 306px;
    height: 44px;
    display: flex;
    justify-content: flex-end;
    border: 1px solid #666;
    border-radius: 6px;
}
.stripe{
    width: 27px;
    height: 45px;
    margin-right: 25px;
}
.belt-white{
    background: #fff;
}
.belt-yellow{
    background: #ff0;
}
.belt-green{
    background: #008000;
}
.belt-blue{
    background: #00f;
}
.belt-red{
    background: #f00;
}
.belt-black{
    background: #000;
}
.grey-laptop{
    margin-top: 27.5px;
    border-top: 1px solid #c4ccd6;
    height: 200px;
}

/* ghost scrollbars */
.ghost{
    position: absolute;
    height: 8px;
    background: rgba(0,0,0,.2);
}
.ghost-a1{
    left: 14px;
    top: 806px;
    width: 668px;
}
.ghost-a2{
    left: 1159px;
    top: 806px;
    width: 478px;
    border-radius: 4px 0 0 4px;
}
.ghost-b1{
    left: 14px;
    top: 1493px;
    width: 668px;
}
.ghost-b2{
    left: 1159px;
    top: 1493px;
    width: 478px;
    border-radius: 4px 0 0 4px;
}
```
